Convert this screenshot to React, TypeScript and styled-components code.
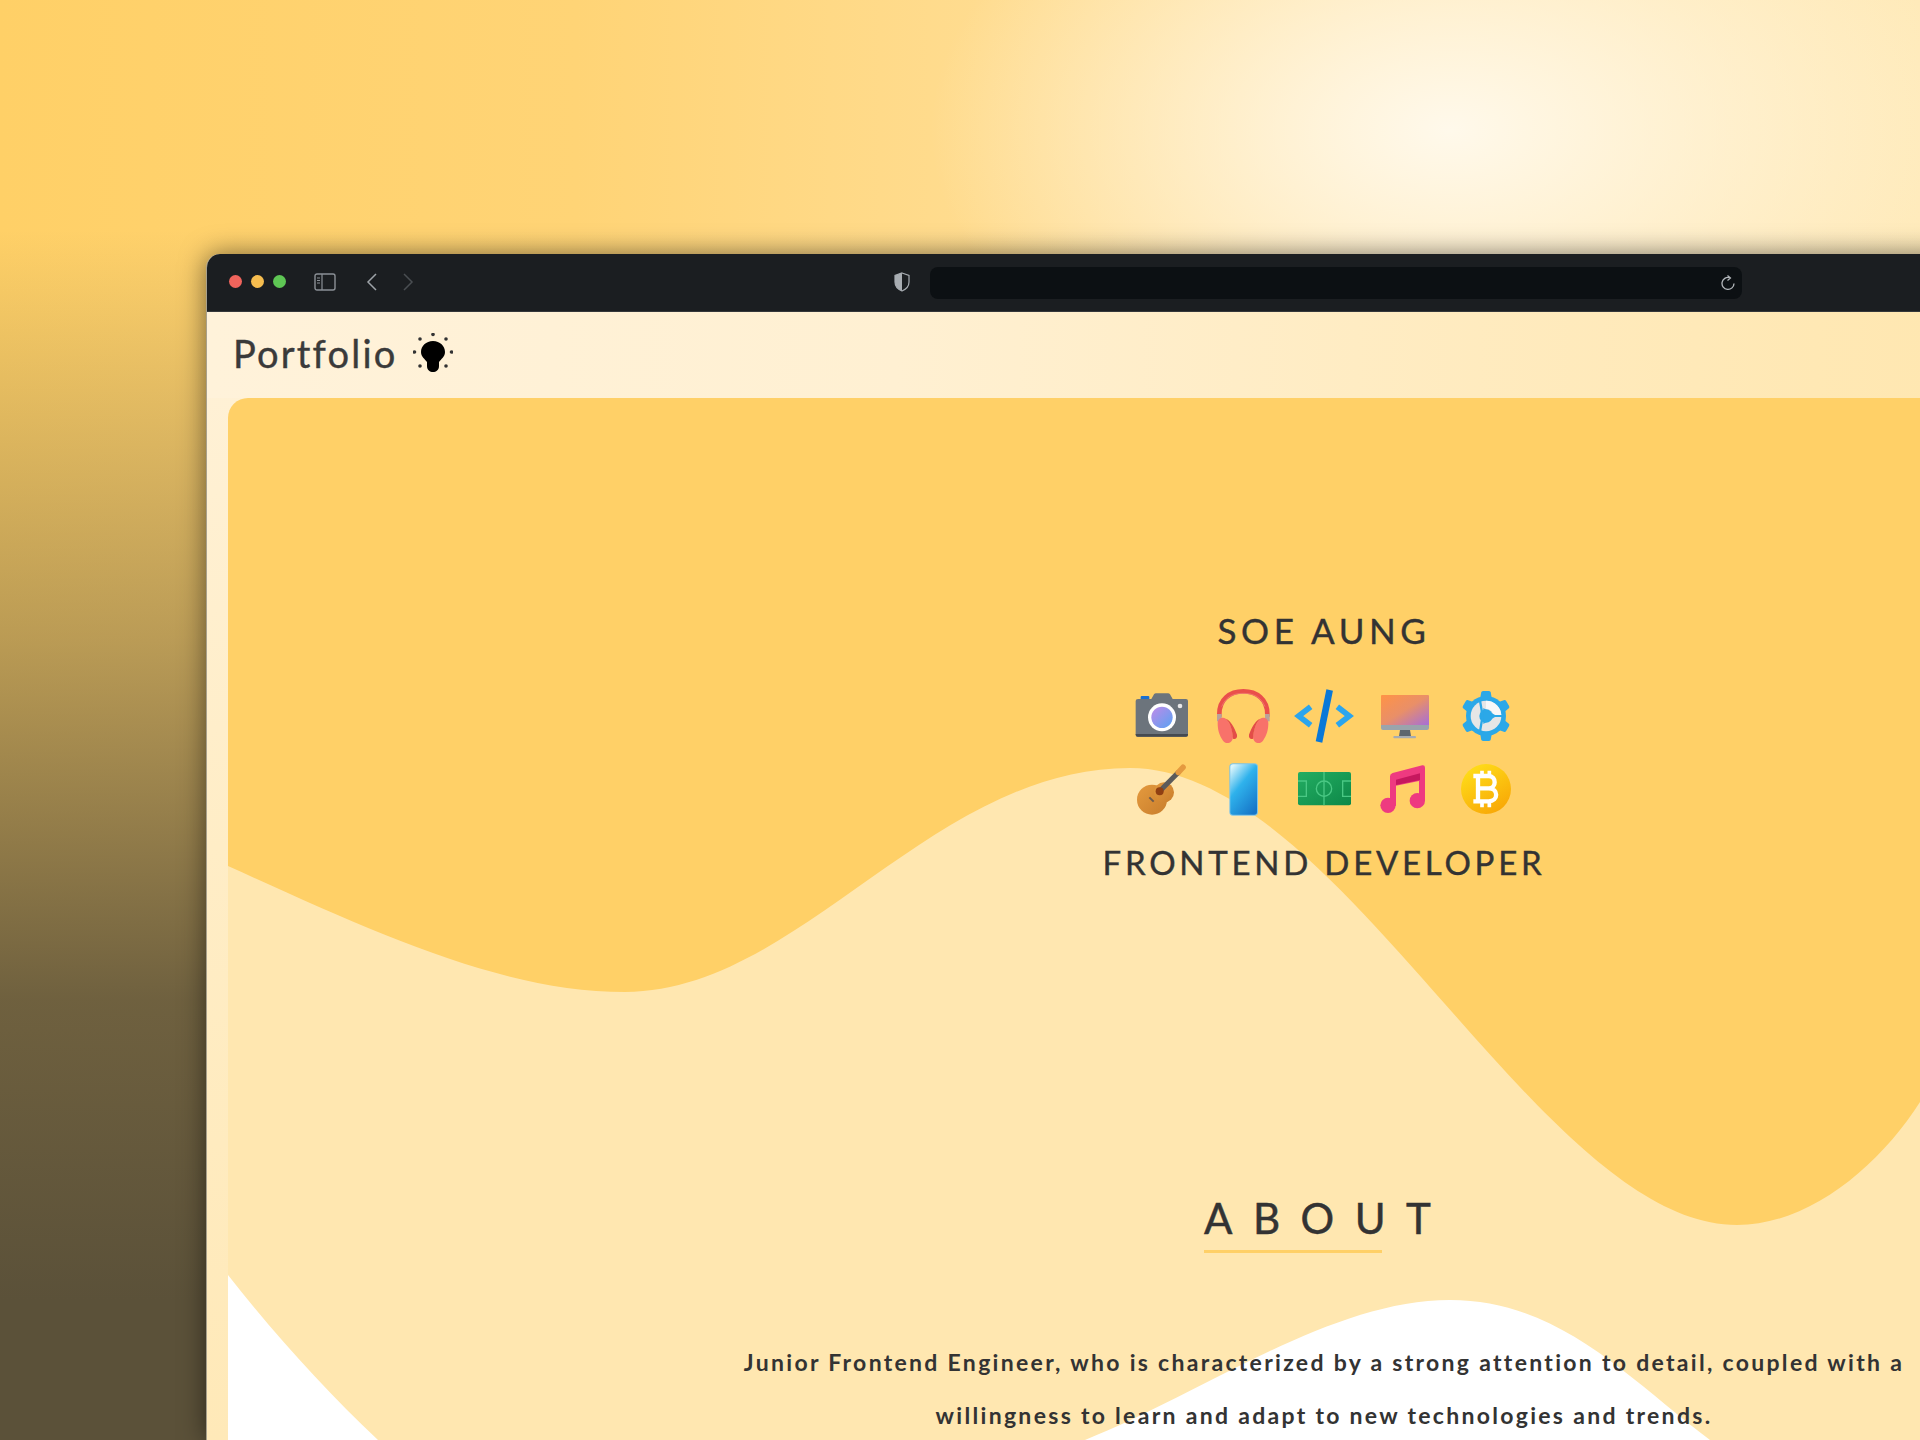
import styled, { createGlobalStyle } from "styled-components";

const GlobalStyle = createGlobalStyle`
  html, body {
    margin: 0;
    padding: 0;
    background: #5b5139;
  }
  * {
    box-sizing: border-box;
  }
`;

const Stage = styled.div`
  width: 1920px;
  height: 1440px;
  overflow: hidden;
  padding: 254px 0 0 206px;
  display: flex;
  align-items: flex-start;
  font-family: Lato, "Open Sans", sans-serif;
  color: #333;
  background:
    radial-gradient(520px 320px at 1450px 130px, rgba(255, 249, 235, 1), rgba(255, 240, 200, 0)),
    linear-gradient(180deg, rgba(91, 81, 57, 0) 230px, rgba(91, 81, 57, 0.42) 640px, rgba(91, 81, 57, 0.88) 1000px, rgba(91, 81, 57, 1) 1300px),
    linear-gradient(90deg, #ffd067 0%, #ffd476 30%, #ffe3a6 70%, #ffeab9 100%);
`;

const Window = styled.div`
  flex: none;
  width: 2300px;
  height: 1186px;
  border-radius: 14px 14px 0 0;
  border-left: 1px solid #a8a08c;
  overflow: hidden;
  display: flex;
  flex-direction: column;
  background: linear-gradient(180deg, #fff2da 0%, #ffedc6 50%, #ffe9b8 100%);
  box-shadow: 0 0 26px rgba(0, 0, 0, 0.5);
`;

const TitleBar = styled.div`
  flex: none;
  height: 58px;
  display: flex;
  align-items: center;
  padding-left: 22px;
  background: #1b1e21;
  border-bottom: 1px solid #34373a;
`;

const Light = styled.span<{ $color: string }>`
  width: 13px;
  height: 13px;
  border-radius: 50%;
  margin: 0 9px 2px 0;
  background: ${(p) => p.$color};
`;

const ToolIcon = styled.svg<{ $left: number }>`
  flex: none;
  margin-left: ${(p) => p.$left}px;
  margin-bottom: 1px;
`;

const AddressBar = styled.div`
  flex: none;
  width: 812px;
  height: 32px;
  margin-left: 20px;
  border-radius: 8px;
  background: #0c1013;
  display: flex;
  align-items: center;
  justify-content: flex-end;
  padding-right: 7px;
`;

const Header = styled.div`
  flex: none;
  height: 86px;
  display: flex;
  align-items: center;
  gap: 15px;
  padding: 0 0 4px 26px;
  background: linear-gradient(90deg, #fff2da 0%, #fff0d2 30%, #ffe8b4 70%, #ffe2a2 100%);
`;

const Brand = styled.div`
  font-size: 38px;
  letter-spacing: 2.2px;
  line-height: 44px;
  color: #3a3a3a;
  -webkit-text-stroke: 0.4px #3a3a3a;
`;

const Body = styled.div`
  flex: 1;
  padding-left: 21px;
`;

const Hero = styled.div`
  position: relative;
  width: 2192px;
  height: 1100px;
  border-radius: 20px 0 0 0;
  overflow: hidden;
  background: #ffd067;
  display: flex;
  flex-direction: column;
  align-items: center;
  padding-top: 211px;
`;

const Waves = styled.svg`
  position: absolute;
  top: 0;
  left: 0;
`;

const Content = styled.div`
  position: relative;
  display: flex;
  flex-direction: column;
  align-items: center;
`;

const Name = styled.h1`
  margin: 0;
  font-size: 35px;
  font-weight: 400;
  line-height: 42px;
  letter-spacing: 4.6px;
  -webkit-text-stroke: 0.4px #333;
`;

const IconGrid = styled.div`
  display: grid;
  grid-template-columns: repeat(5, 81px);
  grid-auto-rows: 73px;
  justify-items: center;
  align-items: center;
  margin-top: 28px;
`;

const Role = styled.h2`
  margin: 17px 0 0;
  font-size: 33px;
  font-weight: 400;
  line-height: 40px;
  letter-spacing: 3.75px;
  -webkit-text-stroke: 0.4px #333;
`;

const AboutTitle = styled.div`
  position: relative;
  margin-top: 311px;
  height: 50px;
  width: 240px;
  font-size: 42px;
  line-height: 50px;
  letter-spacing: 20.5px;
  white-space: nowrap;
  -webkit-text-stroke: 0.5px #333;
  &::after {
    content: "";
    position: absolute;
    left: 0;
    bottom: -10px;
    width: 178px;
    height: 3px;
    background: #ffd067;
  }
`;

const About = styled.p`
  margin: 93px 0 0;
  width: 1240px;
  font-size: 23px;
  font-weight: 700;
  line-height: 53px;
  letter-spacing: 2.3px;
  text-align: center;
`;

const IconSvg = styled.svg`
  display: block;
`;

const Camera = () => (
  <IconSvg width="60" height="60" viewBox="0 0 180 180">
    <defs>
      <linearGradient id="lens" x1="0" y1="0" x2="1" y2="1">
        <stop offset="0" stopColor="#c08ae8" />
        <stop offset="1" stopColor="#5aa2f2" />
      </linearGradient>
    </defs>
    <rect x="26" y="30" width="26" height="14" rx="3" fill="#1a6fd0" />
    <path d="M11 45 Q11 39 18 39 H58 L66 25 Q68 22 72 22 H108 Q112 22 114 25 L122 39 H162 Q168 39 168 45 V146 Q168 152 162 152 H17 Q11 152 11 146 Z" fill="#6c747c" />
    <path d="M11 144 H168 V146 Q168 152 162 152 H17 Q11 152 11 146 Z" fill="#454a50" />
    <circle cx="90" cy="94" r="42" fill="#fff" />
    <circle cx="90" cy="94" r="32" fill="url(#lens)" />
    <circle cx="144" cy="60" r="7" fill="#e8e8e8" />
  </IconSvg>
);

const Headphones = () => (
  <IconSvg width="60" height="60" viewBox="0 0 180 180">
    <path d="M19 92 V84 C19 40 50 16 91 16 C132 16 163 40 163 84 V92" fill="none" stroke="#ea4f4b" strokeWidth="14" />
    <path d="M26 62 C38 32 62 22 91 22 C120 22 144 32 156 62" fill="none" stroke="#f28a80" strokeWidth="3" opacity="0.6" />
    <rect x="12" y="84" width="14" height="22" fill="#b9a29a" />
    <rect x="156" y="84" width="14" height="22" fill="#b9a29a" />
    <path d="M14 112 C14 96 30 92 38 98 C52 110 58 132 60 152 C60 170 40 178 30 164 C18 148 14 130 14 112 Z" fill="#f8726a" />
    <path d="M38 98 C52 102 64 124 72 146 C74 156 66 162 60 158 C58 132 52 110 38 98 Z" fill="#e34d48" />
    <path d="M166 112 C166 96 150 92 142 98 C128 110 122 132 120 152 C120 170 140 178 150 164 C162 148 166 130 166 112 Z" fill="#f8726a" />
    <path d="M142 98 C128 102 116 124 108 146 C106 156 114 162 120 158 C122 132 128 110 142 98 Z" fill="#e34d48" />
  </IconSvg>
);

const CodeIcon = () => (
  <IconSvg width="60" height="60" viewBox="0 0 180 180">
    <path d="M50 62 L14 90 L50 118" fill="none" stroke="#2ba5ee" strokeWidth="17" strokeLinejoin="miter" />
    <path d="M130 62 L166 90 L130 118" fill="none" stroke="#2ba5ee" strokeWidth="17" strokeLinejoin="miter" />
    <path d="M107 12 L75 168" fill="none" stroke="#0a78d8" strokeWidth="20" />
  </IconSvg>
);

const Monitor = () => (
  <IconSvg width="60" height="60" viewBox="0 0 180 180">
    <defs>
      <linearGradient id="screen" x1="0" y1="0" x2="1" y2="1">
        <stop offset="0" stopColor="#ff9346" />
        <stop offset="0.5" stopColor="#e98f68" />
        <stop offset="1" stopColor="#a56fd8" />
      </linearGradient>
    </defs>
    <path d="M75 132 H105 L108 150 H72 Z" fill="#5d666e" />
    <rect x="55" y="150" width="68" height="7" rx="3" fill="#a6acb2" />
    <path d="M18 30 Q18 27 21 27 H159 Q162 27 162 30 V117 H18 Z" fill="url(#screen)" />
    <path d="M18 117 H162 V126 Q162 132 156 132 H24 Q18 132 18 126 Z" fill="#9aa4ac" />
  </IconSvg>
);

const Gear = () => (
  <IconSvg width="60" height="60" viewBox="0 0 180 180">
    <g fill="#2ba8e8">
      <circle cx="90" cy="90" r="60" />
      {[0, 60, 120, 180, 240, 300].map((a) => (
        <path key={a} d="M72 40 L76 18 Q78 15 82 15 H98 Q102 15 104 18 L108 40 Z" transform={`rotate(${a} 90 90)`} />
      ))}
    </g>
    <circle cx="90" cy="90" r="46" fill="#e6e6e6" />
    <path d="M90 44 A46 46 0 0 1 136 88 H112 A22 22 0 0 0 90 68 Z" fill="#f8f8f8" />
    <circle cx="90" cy="90" r="20" fill="#2ba8e8" />
    <path d="M82 66 L122 90 L82 114 Z" fill="#2ba8e8" />
    <path d="M72 44 L80 90 L72 136" fill="none" stroke="#2ba8e8" strokeWidth="7" />
    <path d="M112 90 H138" fill="none" stroke="#2ba8e8" strokeWidth="6" />
  </IconSvg>
);

const Guitar = () => (
  <IconSvg width="60" height="60" viewBox="0 0 180 180">
    <defs>
      <linearGradient id="wood" x1="0" y1="0" x2="1" y2="1">
        <stop offset="0" stopColor="#e49a3e" />
        <stop offset="1" stopColor="#c97e2c" />
      </linearGradient>
    </defs>
    <circle cx="60" cy="122" r="45" fill="url(#wood)" />
    <circle cx="96" cy="100" r="30" fill="url(#wood)" />
    <path d="M83 97 L141 38" stroke="#5b5b5b" strokeWidth="15" />
    <path d="M139 40 L153 25" stroke="#e59a3f" strokeWidth="17" strokeLinecap="round" />
    <circle cx="83" cy="97" r="12" fill="#8f3f12" />
    <path d="M52 115 L65 128" stroke="#6d5a4c" strokeWidth="6" />
  </IconSvg>
);

const Phone = () => (
  <IconSvg width="60" height="60" viewBox="0 0 180 180">
    <defs>
      <linearGradient id="phone" x1="0.15" y1="0" x2="0.8" y2="1">
        <stop offset="0" stopColor="#d8f4fb" />
        <stop offset="0.4" stopColor="#2fb2ec" />
        <stop offset="1" stopColor="#1676c8" />
      </linearGradient>
    </defs>
    <rect x="49" y="13" width="86" height="157" rx="11" fill="#7cc4e8" />
    <rect x="52" y="16" width="80" height="151" rx="8" fill="url(#phone)" />
  </IconSvg>
);

const Pitch = () => (
  <IconSvg width="60" height="60" viewBox="0 0 180 180">
    <defs>
      <linearGradient id="grass" x1="0" y1="0" x2="1" y2="1">
        <stop offset="0" stopColor="#23ad62" />
        <stop offset="1" stopColor="#0d8848" />
      </linearGradient>
    </defs>
    <rect x="12" y="39" width="159" height="100" rx="6" fill="url(#grass)" />
    <g fill="none" stroke="#4ac884" strokeWidth="4">
      <path d="M90 39 V139" />
      <circle cx="90" cy="89" r="23" />
      <path d="M12 66 H37 V112 H12" />
      <path d="M171 66 H146 V112 H171" />
    </g>
  </IconSvg>
);

const Music = () => (
  <IconSvg width="60" height="60" viewBox="0 0 180 180">
    <circle cx="39" cy="139" r="23" fill="#ee3a80" />
    <circle cx="127" cy="125" r="23" fill="#ee3a80" />
    <path d="M45 140 V52 Q45 44 53 42 L142 19 Q150 18 150 26 V125 H132 V66 L63 80 V140 Z" fill="#ee3a80" />
    <path d="M63 62 L135 43 V63 L63 78 Z" fill="#c6175e" />
  </IconSvg>
);

const Bitcoin = () => (
  <IconSvg width="60" height="60" viewBox="0 0 180 180">
    <defs>
      <linearGradient id="coin" x1="0.2" y1="0" x2="0.8" y2="1">
        <stop offset="0" stopColor="#ffdf1a" />
        <stop offset="1" stopColor="#f8a505" />
      </linearGradient>
    </defs>
    <circle cx="90" cy="90" r="75" fill="url(#coin)" />
    <g fill="none" stroke="#fff" strokeWidth="13">
      <path d="M52 51 H98 C122 51 122 88 98 88 H66 M98 88 C128 88 128 127 98 127 H52 M66 46 V132" />
      <path d="M78 35 V48 M100 35 V48 M78 132 V145 M100 132 V145" strokeWidth="11" />
    </g>
  </IconSvg>
);

const skills = [Camera, Headphones, CodeIcon, Monitor, Gear, Guitar, Phone, Pitch, Music, Bitcoin];

const App = () => {
  return (
    <Stage>
      <GlobalStyle />
      <Window>
        <TitleBar>
          <Light $color="#f0645c" />
          <Light $color="#f6bd4f" />
          <Light $color="#5ec654" />
          <ToolIcon $left={19} width="22" height="18" viewBox="0 0 22 18" fill="none">
            <rect x="1" y="1" width="20" height="16" rx="2" stroke="#8b9096" strokeWidth="1.4" />
            <path d="M8 1 V17 M3 5 H6 M3 7.5 H6 M3 10 H6" stroke="#8b9096" strokeWidth="1.2" />
          </ToolIcon>
          <ToolIcon $left={30} width="12" height="18" viewBox="0 0 12 18" fill="none">
            <path d="M10 1 L2 9 L10 17" stroke="#9ea3a8" strokeWidth="1.5" />
          </ToolIcon>
          <ToolIcon $left={24} width="12" height="18" viewBox="0 0 12 18" fill="none">
            <path d="M2 1 L10 9 L2 17" stroke="#4a4e52" strokeWidth="1.5" />
          </ToolIcon>
          <ToolIcon $left={480} width="16" height="20" viewBox="0 0 16 20" fill="none">
            <path d="M8 1 L15 3.5 V10 C15 14.5 11.5 17.5 8 19 C4.5 17.5 1 14.5 1 10 V3.5 Z" stroke="#a8adb2" strokeWidth="1.2" />
            <path d="M8 1 L1 3.5 V10 C1 14.5 4.5 17.5 8 19 Z" fill="#a8adb2" />
          </ToolIcon>
          <AddressBar>
            <svg width="14" height="16" viewBox="0 0 14 16" fill="none">
              <path d="M8.5 2.6 A6 6 0 1 0 13 8.5" stroke="#b4b8bc" strokeWidth="1.3" />
              <path d="M6.5 0.5 L9.5 3 L6.5 5.5" stroke="#b4b8bc" strokeWidth="1.2" />
            </svg>
          </AddressBar>
        </TitleBar>
        <Header>
          <Brand>Portfolio</Brand>
          <svg width="40" height="40" viewBox="0 0 40 40">
            <path d="M20 8 C13 8 8 13 8 19 C8 24 12 26 14 29 V33 C14 37 17 39 20 39 C23 39 26 37 26 33 V29 C28 26 32 24 32 19 C32 13 27 8 20 8 Z" fill="#000" />
            <g fill="#333">
              <circle cx="20" cy="1.5" r="1.8" />
              <circle cx="7" cy="6" r="1.8" />
              <circle cx="33" cy="6" r="1.8" />
              <circle cx="1.5" cy="19" r="1.8" />
              <circle cx="38.5" cy="19" r="1.8" />
              <circle cx="7" cy="33" r="1.8" />
              <circle cx="33" cy="33" r="1.8" />
            </g>
          </svg>
        </Header>
        <Body>
          <Hero>
            <Waves width="1692" height="1042" viewBox="228 398 1692 1042">
              <path d="M228 866 C370 930 500 992 625 992 C800 992 930 768 1130 768 C1340 768 1540 1225 1737 1225 C1810 1225 1880 1165 1920 1102 L1920 1440 L228 1440 Z" fill="#ffe7b0" />
              <path d="M228 1275 C275 1335 325 1390 378 1440 L228 1440 Z" fill="#fff" />
              <path d="M1085 1440 C1200 1395 1330 1300 1450 1300 C1560 1300 1630 1380 1710 1440 Z" fill="#fff" />
            </Waves>
            <Content>
              <Name>SOE AUNG</Name>
              <IconGrid>
                {skills.map((Skill, i) => (
                  <Skill key={i} />
                ))}
              </IconGrid>
              <Role>FRONTEND DEVELOPER</Role>
              <AboutTitle>ABOUT</AboutTitle>
              <About>
                Junior Frontend Engineer, who is characterized by a strong attention to detail, coupled with a
                willingness to learn and adapt to new technologies and trends.
              </About>
            </Content>
          </Hero>
        </Body>
      </Window>
    </Stage>
  );
};

export default App;
